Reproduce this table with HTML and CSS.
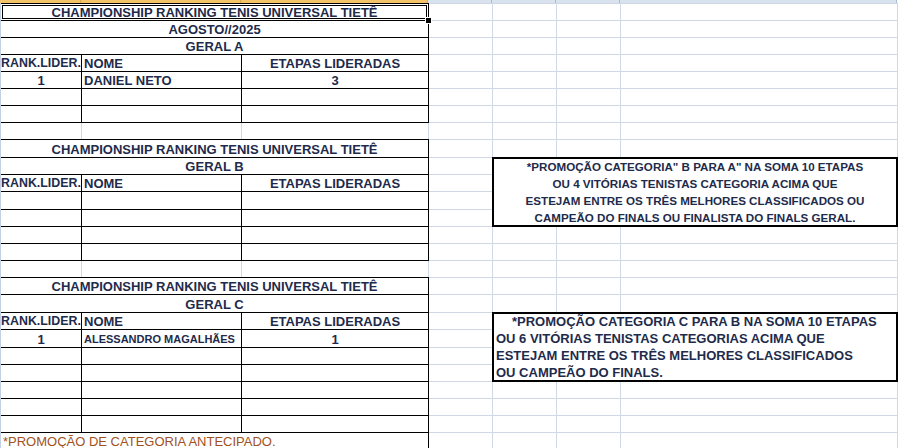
FILE: index.html
```html
<!DOCTYPE html>
<html lang="pt">
<head>
    <meta charset="UTF-8">
    <title>Championship Ranking</title>
    <link rel="stylesheet" href="styles.css">
</head>
<body>
    <div class="colheads">
        <div class="on w-a"></div>
        <div class="on w-b"></div>
        <div class="on w-c"></div>
        <div class="w-d"></div>
        <div class="w-d"></div>
        <div class="w-d"></div>
        <div class="w-g"></div>
    </div>
    <div class="grid">
        <table class="sheet">
            <colgroup>
                <col class="c-a"><col class="c-b"><col class="c-c">
                <col class="c-d"><col class="c-d"><col class="c-d"><col class="c-g">
            </colgroup>
            <!-- geral A -->
            <tr><td colspan="3" class="b ctr sel">CHAMPIONSHIP RANKING TENIS UNIVERSAL TIETÊ</td><td></td><td></td><td></td><td></td></tr>
            <tr><td colspan="3" class="b ctr">AGOSTO//2025</td><td></td><td></td><td></td><td></td></tr>
            <tr><td colspan="3" class="b ctr">GERAL A</td><td></td><td></td><td></td><td></td></tr>
            <tr><td class="b ctr rk">RANK.LIDER.</td><td class="b ind">NOME</td><td class="b ctr">ETAPAS LIDERADAS</td><td></td><td></td><td></td><td></td></tr>
            <tr><td class="b ctr">1</td><td class="b ind">DANIEL NETO</td><td class="b ctr">3</td><td></td><td></td><td></td><td></td></tr>
            <tr><td class="b"></td><td class="b"></td><td class="b"></td><td></td><td></td><td></td><td></td></tr>
            <tr><td class="b"></td><td class="b"></td><td class="b"></td><td></td><td></td><td></td><td></td></tr>
            <tr><td></td><td></td><td></td><td></td><td></td><td></td><td></td></tr>

            <!-- geral B -->
            <tr class="tall"><td colspan="3" class="b ctr">CHAMPIONSHIP RANKING TENIS UNIVERSAL TIETÊ</td><td></td><td></td><td></td><td></td></tr>
            <tr>
                <td colspan="3" class="b ctr">GERAL B</td><td></td>
                <td colspan="3" rowspan="4" class="note note-b">
                    <div>*PROMOÇÃO CATEGORIA" B PARA A" NA SOMA 10 ETAPAS</div>
                    <div>OU 4 VITÓRIAS TENISTAS CATEGORIA ACIMA QUE</div>
                    <div>ESTEJAM ENTRE OS TRÊS MELHORES CLASSIFICADOS OU</div>
                    <div>CAMPEÃO DO FINALS OU FINALISTA DO FINALS GERAL.</div>
                </td>
            </tr>
            <tr><td class="b ctr rk">RANK.LIDER.</td><td class="b ind">NOME</td><td class="b ctr">ETAPAS LIDERADAS</td><td></td></tr>
            <tr class="tall"><td class="b"></td><td class="b"></td><td class="b"></td><td></td></tr>
            <tr><td class="b"></td><td class="b"></td><td class="b"></td><td></td></tr>
            <tr><td class="b"></td><td class="b"></td><td class="b"></td><td></td><td></td><td></td><td></td></tr>
            <tr><td class="b"></td><td class="b"></td><td class="b"></td><td></td><td></td><td></td><td></td></tr>
            <tr><td></td><td></td><td></td><td></td><td></td><td></td><td></td></tr>

            <!-- geral C -->
            <tr><td colspan="3" class="b ctr">CHAMPIONSHIP RANKING TENIS UNIVERSAL TIETÊ</td><td></td><td></td><td></td><td></td></tr>
            <tr class="tall"><td colspan="3" class="b ctr">GERAL C</td><td></td><td></td><td></td><td></td></tr>
            <tr>
                <td class="b ctr rk">RANK.LIDER.</td><td class="b ind">NOME</td><td class="b ctr">ETAPAS LIDERADAS</td><td></td>
                <td colspan="3" rowspan="4" class="note note-c">
                    <div class="indent">*PROMOÇÃO CATEGORIA C PARA B NA SOMA 10 ETAPAS</div>
                    <div>OU 6 VITÓRIAS TENISTAS CATEGORIAS ACIMA QUE</div>
                    <div>ESTEJAM ENTRE OS TRÊS MELHORES CLASSIFICADOS</div>
                    <div>OU CAMPEÃO DO FINALS.</div>
                </td>
            </tr>
            <tr class="tall"><td class="b ctr">1</td><td class="b ind small">ALESSANDRO MAGALHÃES</td><td class="b ctr">1</td><td></td></tr>
            <tr><td class="b"></td><td class="b"></td><td class="b"></td><td></td></tr>
            <tr><td class="b"></td><td class="b"></td><td class="b"></td><td></td></tr>
            <tr><td class="b"></td><td class="b"></td><td class="b"></td><td></td><td></td><td></td><td></td></tr>
            <tr><td class="b"></td><td class="b"></td><td class="b"></td><td></td><td></td><td></td><td></td></tr>
            <tr><td class="b"></td><td class="b"></td><td class="b"></td><td></td><td></td><td></td><td></td></tr>
            <tr><td colspan="3" class="foot">*PROMOÇÃO DE CATEGORIA ANTECIPADO.</td><td></td><td></td><td></td><td></td></tr>
        </table>
    </div>
</body>
</html>
```

FILE: styles.css
```css
body {
    margin: 0;
    background: #FFFFFF;
    font-family: "Liberation Sans", Arial, sans-serif;
    color: #1E2B4B;
    overflow: hidden;
}

/* column header strip (only its bottom edge is visible) */
.colheads {
    display: flex;
    height: 3px;
}
.colheads div {
    box-sizing: border-box;
    height: 3px;
    background: #D9E2EF;
    border-right: 1px solid #A9BCD6;
}
.colheads .on {
    background: #F3C36A;
    border-right-color: #DDA54C;
}
.w-a { width: 81px; }
.w-b { width: 160px; }
.w-c { width: 187px; }
.w-d { width: 64px; }
.w-g { width: 277px; }

.grid {
    position: relative;
}
/* row header edge */
.grid::before {
    content: "";
    position: absolute;
    left: 0;
    top: 0;
    bottom: 0;
    width: 1px;
    background: #C3D1E4;
    z-index: 2;
}

.sheet {
    border-collapse: separate;
    border-spacing: 1px;
    background: #D0D7E5;
    table-layout: fixed;
    width: 898px;
}
.c-a { width: 80px; }
.c-b { width: 159px; }
.c-c { width: 186px; }
.c-d { width: 63px; }
.c-g { width: 276px; }

.sheet td {
    padding: 0;
    height: 16px;
    background: #FFFFFF;
    font-size: 13px;
    font-weight: bold;
    line-height: 15px;
    white-space: nowrap;
    overflow: hidden;
    vertical-align: bottom;
}
.sheet tr.tall td {
    height: 17px;
}

/* black cell borders drawn into the 1px gridline gap */
.sheet td.b {
    box-shadow: 0 0 0 1px #000000;
}
.ctr {
    text-align: center;
}
.ind {
    text-indent: 2px;
}
.sheet td.rk {
    font-size: 12.4px;
}
.sheet td.small {
    font-size: 11px;
}

/* active cell */
.sheet td.sel {
    position: relative;
    overflow: visible;
    box-shadow: 0 0 0 1px #000000, inset 0 0 0 1px #FFFFFF, inset 0 0 0 2px #000000;
}
.sheet td.sel::after {
    content: "";
    position: absolute;
    right: -4px;
    bottom: -4px;
    width: 5px;
    height: 5px;
    background: #000000;
    border: 1px solid #FFFFFF;
}

.sheet td.note {
    vertical-align: middle;
    line-height: 17px;
    white-space: nowrap;
    box-shadow: 0 0 0 1px #000000, inset 0 0 0 1px #000000;
}
.sheet td.note-b {
    font-size: 11.6px;
    text-align: center;
}
.sheet td.note-c {
    font-size: 13px;
    text-align: left;
    padding-left: 3px;
}
.note-c .indent {
    padding-left: 16px;
}

.sheet td.foot {
    font-weight: normal;
    color: #A0521E;
    text-indent: 2px;
    box-shadow: 1px 0 0 #000000;
}
```
